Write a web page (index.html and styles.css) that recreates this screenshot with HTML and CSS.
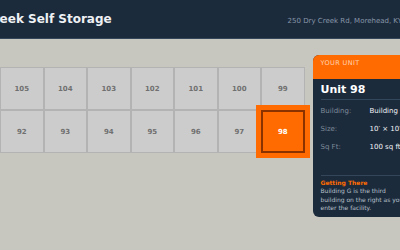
FILE: index.html
```html
<!DOCTYPE html>
<html lang="en">
<head>
    <meta charset="UTF-8">
    <meta name="viewport" content="width=device-width, initial-scale=1.0">
    <title>Dry Creek Self Storage - Find Your Unit</title>
    <link rel="stylesheet" href="styles.css">
</head>
<body>
    <header class="topbar">
        <div class="topbar-inner">
            <h1 class="site-title">Dry Creek Self Storage</h1>
            <span class="site-address">250 Dry Creek Rd, Morehead, KY</span>
        </div>
    </header>
    <main class="layout">
        <div class="unit-grid">
            <div class="unit-cell">105</div>
            <div class="unit-cell">104</div>
            <div class="unit-cell">103</div>
            <div class="unit-cell">102</div>
            <div class="unit-cell">101</div>
            <div class="unit-cell">100</div>
            <div class="unit-cell">99</div>
            <div class="unit-cell">92</div>
            <div class="unit-cell">93</div>
            <div class="unit-cell">94</div>
            <div class="unit-cell">95</div>
            <div class="unit-cell">96</div>
            <div class="unit-cell">97</div>
            <div class="unit-cell is-selected">98</div>
        </div>
        <aside class="unit-panel">
            <div class="unit-panel-head">YOUR UNIT</div>
            <div class="unit-panel-body">
                <h2 class="unit-name">Unit 98</h2>
                <div class="unit-rows">
                    <div class="unit-row"><span class="unit-label">Building:</span><span class="unit-value">Building G</span></div>
                    <div class="unit-row"><span class="unit-label">Size:</span><span class="unit-value">10′ × 10′</span></div>
                    <div class="unit-row"><span class="unit-label">Sq Ft:</span><span class="unit-value">100 sq ft</span></div>
                </div>
                <div class="unit-directions">
                    <div class="unit-directions-title">Getting There</div>
                    <p class="unit-directions-text">Building G is the third building on the right as you enter the facility.</p>
                </div>
            </div>
        </aside>
    </main>
</body>
</html>
```
FILE: styles.css
```css
body {
    font-family: 'DejaVu Sans', Verdana, sans-serif;
    background: #c8c7bf;
    margin: 0;
    padding: 0;
    overflow: hidden;
}
.topbar {
    background: #1c2b3c;
    height: 38px;
    border-bottom: 1px solid #34465a;
    overflow: hidden;
}
.topbar-inner {
    display: flex;
    align-items: baseline;
    justify-content: space-between;
    margin-left: -59px;
    width: 477px;
    padding: 0 16px;
    box-sizing: border-box;
    line-height: 38px;
}
.site-title {
    margin: 0;
    font-size: 12px;
    font-weight: bold;
    color: #eef1f4;
    white-space: nowrap;
}
.site-address {
    font-size: 7px;
    color: #8796a8;
    white-space: nowrap;
}
.layout {
    display: flex;
    align-items: flex-start;
    gap: 8px;
    padding-top: 16px;
}
.unit-grid {
    display: grid;
    grid-template-columns: repeat(7, 43.5px);
    grid-auto-rows: 43px;
    margin-top: 12px;
    flex-shrink: 0;
}
.unit-cell {
    display: flex;
    align-items: center;
    justify-content: center;
    background: #cccccc;
    border: 1px solid #b3b3b3;
    font-size: 7px;
    font-weight: bold;
    color: #707070;
}
.unit-cell.is-selected {
    position: relative;
    z-index: 1;
    background: #ff6b00;
    border: 2px solid #8a3200;
    box-shadow: 0 0 0 5px #ff6b00;
    color: #fff;
}
.unit-panel {
    width: 103px;
    flex-shrink: 0;
    background: #1c2b3c;
    border-radius: 6px;
    overflow: hidden;
}
.unit-panel-head {
    background: #ff6b00;
    padding: 4px 8px 12px;
    font-size: 6.5px;
    line-height: 8px;
    letter-spacing: 0.4px;
    color: rgba(255, 255, 255, 0.7);
}
.unit-panel-body {
    padding: 4px 8px 4px;
}
.unit-name {
    margin: 0;
    padding-bottom: 2px;
    font-size: 11px;
    line-height: 14px;
    color: #fff;
    border-bottom: 1px solid #34465a;
}
.unit-rows {
    padding-top: 2px;
}
.unit-row {
    display: flex;
    align-items: center;
    height: 18px;
    font-size: 7px;
    white-space: nowrap;
}
.unit-label {
    width: 49px;
    flex-shrink: 0;
    color: #7d8a99;
}
.unit-value {
    color: #f2f4f6;
}
.unit-directions {
    margin-top: 19px;
    padding-top: 2px;
    border-top: 1px solid #34465a;
}
.unit-directions-title {
    font-size: 6px;
    line-height: 9px;
    font-weight: bold;
    color: #ff6b00;
}
.unit-directions-text {
    margin: 0;
    font-size: 6px;
    line-height: 8.5px;
    color: #b7c0ca;
}
```
